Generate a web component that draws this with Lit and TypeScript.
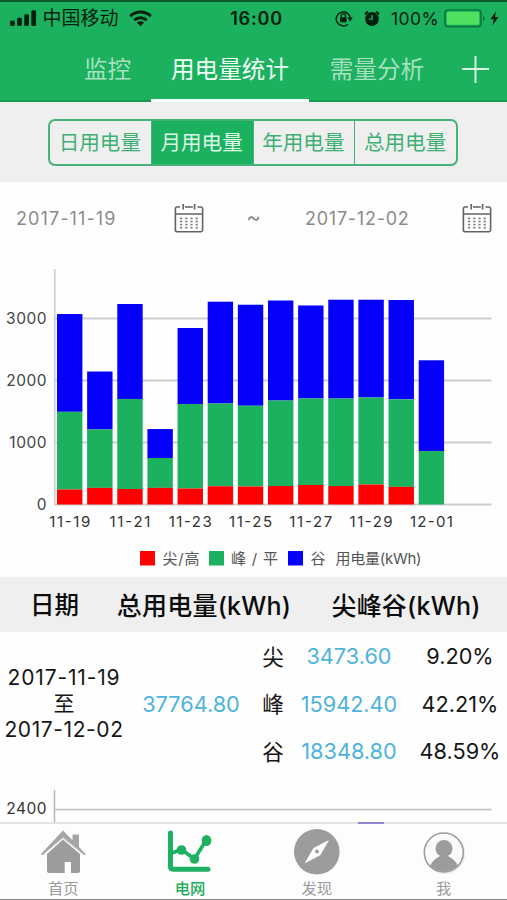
import { LitElement, html, svg, css } from "lit";
import { customElement, property } from "lit/decorators.js";
import { classMap } from "lit/directives/class-map.js";

interface Day {
  peak: number;
  flat: number;
  valley: number;
}

const AXIS_Y = 254.5;
const UNIT = 0.062;
const BAR_W = 25.4;
const PITCH = 30.14;

const DAYS: Day[] = [
  { peak: 242, flat: 1253, valley: 1577 },
  { peak: 268, flat: 942, valley: 935 },
  { peak: 250, flat: 1452, valley: 1532 },
  { peak: 268, flat: 482, valley: 467 },
  { peak: 258, flat: 1363, valley: 1226 },
  { peak: 295, flat: 1334, valley: 1642 },
  { peak: 290, flat: 1303, valley: 1629 },
  { peak: 298, flat: 1379, valley: 1613 },
  { peak: 315, flat: 1395, valley: 1500 },
  { peak: 298, flat: 1411, valley: 1594 },
  { peak: 322, flat: 1404, valley: 1577 },
  { peak: 284, flat: 1413, valley: 1601 },
  { peak: 0, flat: 863, valley: 1463 },
];

const LABELS = ["11-19", "11-21", "11-23", "11-25", "11-27", "11-29", "12-01"];

@customElement("status-bar")
class StatusBar extends LitElement {
  static styles = css`
    :host {
      display: flex;
      height: 36px;
      box-sizing: border-box;
      border-top: 2px solid #0a5a2b;
      align-items: center;
      color: #04210f;
      padding: 0 8px 2px 10px;
    }
    .side { flex: 1; display: flex; align-items: center; }
    .end { justify-content: flex-end; }
    .signal { margin-right: 5.5px; }
    .carrier { font-size: 19px; line-height: 24px; padding-top: 2px; }
    .wifi { margin-left: 10.5px; }
    .time { font-size: 18px; font-weight: 600; letter-spacing: 0.8px; padding-left: 4px; }
    .lock { margin-right: 11px; }
    .alarm { margin-right: 11px; }
    .pct { font-size: 17.5px; letter-spacing: 0.4px; margin-right: 5px; }
    .bolt { margin-left: 4px; }
    svg { display: block; flex: none; }
  `;
  render() {
    return html`
      <div class="side">
        <svg class="signal" width="27" height="18" viewBox="0 0 27 18" fill="currentColor">
          <rect x="0" y="11.5" width="4.8" height="5.5" rx="1.4" />
          <rect x="7.1" y="8.7" width="4.8" height="8.3" rx="1.4" />
          <rect x="14.2" y="5.3" width="4.8" height="11.7" rx="1.4" />
          <rect x="21.3" y="1.3" width="4.8" height="15.7" rx="1.4" />
        </svg>
        <span class="carrier">中国移动</span>
        <svg class="wifi" width="23" height="17" viewBox="0 0 23 17" fill="none" stroke="currentColor" stroke-width="3">
          <path d="M1.2 6.2C7 .7 16 .7 21.8 6.2" />
          <path d="M5.2 10.2c3.6-3.4 9-3.4 12.6 0" />
          <path d="M11.5 16.2 7.8 12.6c2.1-1.9 5.3-1.9 7.4 0z" fill="currentColor" stroke="none" />
        </svg>
      </div>
      <span class="time">16:00</span>
      <div class="side end">
        <svg class="lock" width="18" height="17" viewBox="0 0 18 17">
          <path d="M12.9 14.2A7 7 0 1 1 15.2 8" fill="none" stroke="currentColor" stroke-width="1.5" />
          <path d="M12.4 7.6h5.4l-2.7 3.8z" fill="currentColor" />
          <rect x="5" y="7.2" width="6.6" height="5" rx=".6" fill="currentColor" />
          <path d="M6.2 7.4V6a2.1 2.1 0 0 1 4.2 0v1.4" fill="none" stroke="currentColor" stroke-width="1.3" />
        </svg>
        <svg class="alarm" width="16" height="17" viewBox="0 0 16 17">
          <circle cx="8" cy="9" r="6.9" fill="currentColor" />
          <path d="M.8 4.2 4 1.4M15.2 4.2 12 1.4" stroke="currentColor" stroke-width="2" />
          <path d="M8.2 5v4.2H4.8" fill="none" stroke="#19b25e" stroke-width="1.3" />
        </svg>
        <span class="pct">100%</span>
        <svg width="42" height="19" viewBox="0 0 42 19">
          <rect x="1" y="1" width="36" height="16.6" rx="3.2" fill="none" stroke="#0b7a3c" stroke-width="1.7" />
          <rect x="2.8" y="2.8" width="32.4" height="13" rx="1.6" fill="#4fe060" />
          <path d="M39 6.4c2.4.8 2.4 5 0 5.8z" fill="#0b7a3c" />
        </svg>
        <svg class="bolt" width="9" height="15" viewBox="0 0 9 15">
          <path d="M6 .3.3 8.2h3.5L2.4 14.6 8.7 6H5z" fill="currentColor" />
        </svg>
      </div>
    `;
  }
}

@customElement("top-tabs")
class TopTabs extends LitElement {
  static styles = css`
    :host { display: flex; height: 66px; padding-left: 64px; box-shadow: inset 0 -2px #149c50; }
    .tab {
      font-size: 23.6px;
      color: #a8e0bf;
      box-sizing: border-box;
      border-bottom: 2px solid transparent;
      display: flex;
      justify-content: center;
      align-items: center;
      white-space: nowrap;
    }
    .a { width: 87px; }
    .b { width: 158px; }
    .c { width: 136px; }
    .on { color: #effff5; border-bottom: 3px solid #f4fff8; padding-top: 1px; }
    .add { flex: 1; display: flex; align-items: center; padding-left: 17px; }
  `;
  render() {
    return html`
      <div class="tab a">监控</div>
      <div class="tab b on">用电量统计</div>
      <div class="tab c">需量分析</div>
      <div class="add">
        <svg width="27" height="27" viewBox="0 0 27 27" stroke="#d6f5e2" stroke-width="2">
          <path d="M0 13h27M13.5 0v27" />
        </svg>
      </div>
    `;
  }
}

@customElement("range-picker")
class RangePicker extends LitElement {
  static styles = css`
    :host { display: flex; height: 68px; align-items: center; background: #fefefe; color: #8b8b8b; }
    .date { font-size: 18px; line-height: 24px; margin-top: 5px; white-space: nowrap; }
    .from { width: 158px; padding-left: 16px; letter-spacing: 1.1px; }
    .to { width: 157px; letter-spacing: 0.75px; }
    .tilde { width: 101px; padding: 2px 2px 0 0; box-sizing: border-box; text-align: center; font-size: 22px; }
    svg { display: block; margin-top: 4px; }
  `;
  icon() {
    const dots = [];
    for (let r = 0; r < 4; r++) {
      for (let c = 0; c < 4; c++) {
        dots.push(svg`<rect x=${6 + c * 5.2} y=${14.6 + r * 3.1} width="2.2" height="1.6" fill="#7c7c7c" stroke="none" />`);
      }
    }
    return html`<svg width="30" height="30" viewBox="0 0 30 30" fill="none" stroke="#626262" stroke-width="1.6">
      <path d="M6 4H3.2A1.8 1.8 0 0 0 1.4 5.8V27a1.8 1.8 0 0 0 1.8 1.8h23.6a1.8 1.8 0 0 0 1.8-1.8V5.8A1.8 1.8 0 0 0 26.8 4H23.6M11 4h7.8M1.4 11h27.2M9.2 1v5.600M20.600 1v5.600" />
      ${dots}
    </svg>`;
  }
  render() {
    return html`
      <span class="date from">2017-11-19</span>
      ${this.icon()}
      <span class="tilde">~</span>
      <span class="date to">2017-12-02</span>
      ${this.icon()}
    `;
  }
}

@customElement("usage-chart")
class UsageChart extends LitElement {
  static styles = css`
    :host { display: block; height: 327px; background: #fefefe; }
    svg { display: block; }
    .num { font-size: 15.5px; fill: #444; letter-spacing: 0.5px; text-anchor: end; }
    .day { font-size: 15px; fill: #333; text-anchor: middle; }
    .key { font-size: 15px; fill: #555; }
  `;
  bar(d: Day, i: number) {
    const x = 57 + i * PITCH;
    const seg = (from: number, size: number, fill: string) =>
      svg`<rect x=${x} y=${AXIS_Y - (from + size) * UNIT} width=${BAR_W} height=${size * UNIT} fill=${fill} />`;
    return svg`
      ${seg(d.peak + d.flat, d.valley, "#0400fc")}
      ${seg(d.peak, d.flat, "#1bb15f")}
      ${seg(0, d.peak, "#fe0000")}`;
  }
  render() {
    return html`<svg width="507" height="327" viewBox="0 0 507 327">
      ${[0, 1000, 2000, 3000].map((v) => {
        const y = AXIS_Y - v * UNIT;
        return svg`
          <path d="M54 ${y}H491.5" stroke="#cdcdcd" stroke-width="2" />
          <text class="num" x="47" y=${y + 5}>${v}</text>`;
      })}
      <path d="M54.7 19V255" stroke="#cdcdcd" stroke-width="1.6" />
      ${DAYS.map((d, i) => this.bar(d, i))}
      ${LABELS.map(
        (t, i) =>
          svg`<text class="day" x=${69.7 + i * PITCH * 2} y="276.5" textLength=${i === 0 || i === 1 ? 41 : 43}>${t}</text>`
      )}
      <rect x="140" y="301" width="15" height="14.5" fill="#fe0000" />
      <text class="key" x="162.5" y="314" textLength="37">尖/高</text>
      <rect x="209" y="301" width="15" height="14.5" fill="#1bb15f" />
      <text class="key" x="231" y="314" textLength="47">峰 / 平</text>
      <rect x="288" y="301" width="15" height="14.5" fill="#0400fc" />
      <text class="key" x="310.5" y="314">谷</text>
      <text class="key" x="335.5" y="314" textLength="86">用电量(kWh)</text>
    </svg>`;
  }
}

@customElement("usage-table")
class UsageTable extends LitElement {
  static styles = css`
    :host { display: block; color: #161616; background: #fefefe; }
    .head { display: flex; height: 55px; align-items: center; box-sizing: border-box; padding-bottom: 2px; background: #efefef; font-size: 25px; font-weight: 500; white-space: nowrap; color: #0c0c0c; }
    .head span { flex: none; text-align: center; box-sizing: border-box; }
    .h1 { width: 109px; font-size: 24.5px; }
    .h2 { width: 190px; letter-spacing: 0.2px; }
    .h3 { width: 208px; padding-left: 6px; letter-spacing: 0.2px; }
    .body { display: flex; height: 143px; align-items: center; }
    .period { width: 128px; text-align: center; font-size: 21px; line-height: 26px; padding-top: 1px; }
    .start { letter-spacing: 0.85px; }
    .end { letter-spacing: 0.6px; }
    .total { width: 126px; text-align: center; font-size: 21.7px; color: #4fb3dd; }
    .parts { width: 253px; }
    .part { display: flex; height: 47.5px; align-items: center; font-size: 21.7px; }
    .part span { flex: none; text-align: center; }
    .name { width: 38px; padding-bottom: 2px; }
    .value { width: 114px; color: #4fb3dd; }
    .share { width: 108px; }
  `;
  render() {
    const parts = [
      ["尖", "3473.60", "9.20%"],
      ["峰", "15942.40", "42.21%"],
      ["谷", "18348.80", "48.59%"],
    ];
    return html`
      <div class="head">
        <span class="h1">日期</span><span class="h2">总用电量(kWh)</span><span class="h3">尖峰谷(kWh)</span>
      </div>
      <div class="body">
        <div class="period"><div class="start">2017-11-19</div><div>至</div><div class="end">2017-12-02</div></div>
        <div class="total">37764.80</div>
        <div class="parts">
          ${parts.map(
            ([n, v, s]) => html`<div class="part">
              <span class="name">${n}</span><span class="value">${v}</span><span class="share">${s}</span>
            </div>`
          )}
        </div>
      </div>
    `;
  }
}

@customElement("trend-chart")
class TrendChart extends LitElement {
  static styles = css`
    :host { display: block; background: #fefefe; }
    svg { display: block; }
    .num { font-size: 15.5px; fill: #333; letter-spacing: 0.5px; text-anchor: end; }
  `;
  render() {
    return html`<svg width="507" height="47" viewBox="0 0 507 47">
      <path d="M54.5 15V47" stroke="#b5b5b5" stroke-width="1.5" />
      <path d="M54 34.5H491.5" stroke="#bdbdbd" stroke-width="1.5" />
      <text class="num" x="47" y="38.5">2400</text>
    </svg>`;
  }
}

@customElement("nav-item")
class NavItem extends LitElement {
  @property() label = "";
  @property({ type: Boolean }) active = false;
  static styles = css`
    :host { flex: 1; }
    .item { display: flex; flex-direction: column; align-items: center; color: #9b9b9b; }
    .on { color: #1fad5e; font-weight: 500; }
    .label { font-size: 15.3px; line-height: 20px; margin-top: 3px; }
  `;
  render() {
    return html`<div class=${classMap({ item: true, on: this.active })}>
      <slot></slot><span class="label">${this.label}</span>
    </div>`;
  }
}

@customElement("app-root")
class AppRoot extends LitElement {
  static styles = css`
    :host {
      display: flex;
      flex-direction: column;
      width: 507px;
      height: 900px;
      overflow: hidden;
      background: #fefefe;
      font-family: Inter, "Noto Sans CJK SC", sans-serif;
    }
    .top { background: #1bb15f; }
    .modes { height: 80px; background: #efefef; display: flex; justify-content: center; align-items: flex-start; padding-top: 17px; box-sizing: border-box; }
    .group { display: flex; width: 410px; height: 47px; box-sizing: border-box; border: 2px solid #46b279; border-radius: 7px; overflow: hidden; margin-right: 1px; }
    .mode { flex: 1; display: flex; align-items: center; justify-content: center; padding: 0 1px 3px 0; font-size: 20.6px; color: #3fb075; border-right: 1.5px solid #46b279; white-space: nowrap; }
    .mode:last-child { border-right: none; }
    .chosen { background: #1bb15f; color: #dcf8e7; }
    .nav { display: flex; height: 78px; box-sizing: border-box; background: #fdfdfd; border-top: 2px solid #e3e3e3; border-bottom: 1px solid #8c8c8c; padding-top: 4px; position: relative; }
    .peek { position: absolute; left: 358px; top: -2px; width: 26px; height: 2px; background: #8f87cb; }
    .nav svg { display: block; }
    trend-chart { flex: 1; min-height: 0; overflow: hidden; }
  `;
  render() {
    return html`
      <div class="top"><status-bar></status-bar><top-tabs></top-tabs></div>
      <div class="modes">
        <div class="group">
          ${["日用电量", "月用电量", "年用电量", "总用电量"].map(
            (m, i) => html`<div class=${classMap({ mode: true, chosen: i === 1 })}>${m}</div>`
          )}
        </div>
      </div>
      <range-picker></range-picker>
      <usage-chart></usage-chart>
      <usage-table></usage-table>
      <trend-chart></trend-chart>
      <div class="nav">
        <div class="peek"></div>
        <nav-item label="首页">
          <svg width="48" height="48" viewBox="0 0 48 48" fill="#9c9c9c">
            <path d="M1.5 26.5 24 2.500l9.500 9.800V6.500H40v12.400l7 7.600-2 .5-21-17L3.500 27z" fill="#a5a5a5" />
            <path d="M8 26 24 11.500 41 26v17a2 2 0 0 1-2 2h-7V34h-6.300v11H10a2 2 0 0 1-2-2z" />
            <path d="M4 26.500 24 9.300l20.500 17" fill="none" stroke="#c4c4c4" stroke-width="1" />
          </svg>
        </nav-item>
        <nav-item label="电网" active>
          <svg width="48" height="48" viewBox="0 0 48 48" fill="none" stroke="#1fb162" stroke-linecap="round" stroke-linejoin="round">
            <path d="M4.500 5v33.500q0 2.700 2.700 2.700H42" stroke-width="5" />
            <path d="M6 25l9.500-3.500 13 9.500 12-19.500" stroke-width="3.600" />
            <g fill="#1fb162" stroke="none">
              <circle cx="15.500" cy="22" r="4.800" /><circle cx="28.500" cy="31" r="4.800" /><ellipse cx="40.500" cy="12.500" rx="4.800" ry="5.600" />
            </g>
          </svg>
        </nav-item>
        <nav-item label="发现">
          <svg width="48" height="48" viewBox="0 0 48 48">
            <circle cx="23.800" cy="23.800" r="22.800" fill="#9c9c9c" />
            <path d="M36 12 27.500 27 11.500 35.500 20.500 20z" fill="#fdfdfd" />
            <circle cx="24" cy="23.500" r="1.900" fill="#9c9c9c" />
          </svg>
        </nav-item>
        <nav-item label="我">
          <svg width="48" height="48" viewBox="0 0 48 48">
            <defs><clipPath id="face"><circle cx="23.800" cy="24.500" r="19" /></clipPath></defs>
            <circle cx="24.800" cy="25.500" r="20.500" fill="#ececec" />
            <circle cx="23.800" cy="24.500" r="19.500" fill="#fafafa" stroke="#9a9a9a" stroke-width="1.500" />
            <g clip-path="url(#face)" fill="#9c9c9c">
              <circle cx="24" cy="20.500" r="8.500" />
              <path d="M8 46c1-10 6-15 12-18h8C34 31 39 36 40 46z" />
            </g>
          </svg>
        </nav-item>
      </div>
    `;
  }
}
